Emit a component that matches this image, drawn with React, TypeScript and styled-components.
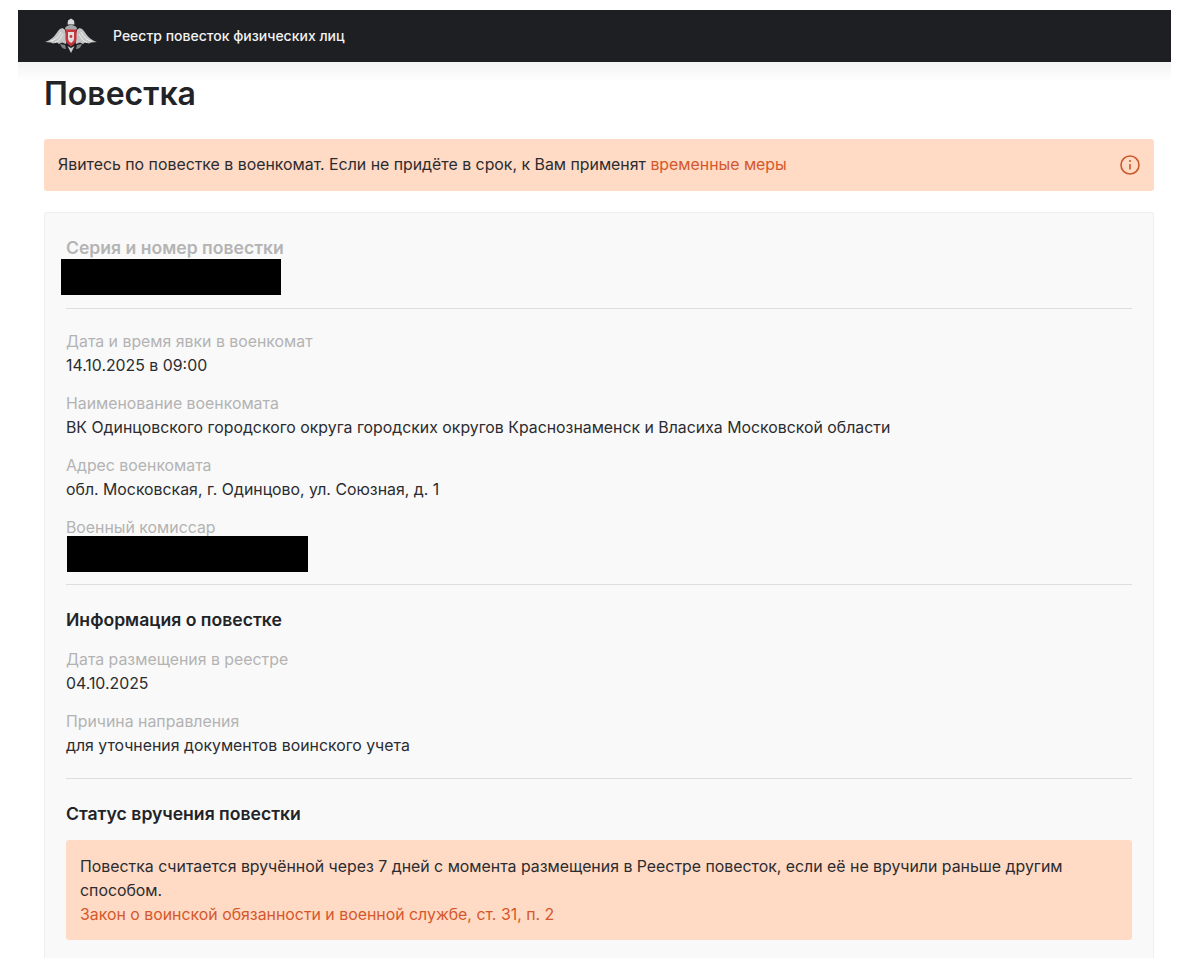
import styled, { createGlobalStyle } from 'styled-components';

const GlobalStyle = createGlobalStyle`
  html, body {
    margin: 0;
    padding: 0;
    background: #fff;
  }
  body {
    font-family: Inter, "Liberation Sans", sans-serif;
    color: #2b2c30;
  }
`;

const Page = styled.div`
  width: 1200px;
  height: 965px;
  padding: 10px 29px 7px 18px;
  box-sizing: border-box;
  overflow: hidden;
`;

const Shell = styled.div`
  height: 100%;
  overflow: hidden;
`;

const TopBar = styled.header`
  height: 52px;
  box-sizing: border-box;
  background: #1e1f23;
  display: flex;
  align-items: center;
  padding: 0 0 1px 27px;
  gap: 16px;
`;

const TopBarTitle = styled.span`
  color: #f2f2f2;
  font-size: 14px;
  font-weight: 500;
`;

const Main = styled.main`
  padding: 0 17px 0 26px;
  background: linear-gradient(#f3f3f3 0, #fff 20px);
`;

const PageTitle = styled.h1`
  margin: 0;
  padding-top: 13px;
  height: 64px;
  box-sizing: border-box;
  font-size: 32px;
  line-height: 38px;
  font-weight: 600;
  color: #222327;
`;

const Notice = styled.div`
  background: #ffdac4;
  border-radius: 3px;
  display: flex;
  align-items: center;
  justify-content: space-between;
  height: 52px;
  margin-top: 13px;
  padding: 0 14px;
  font-size: 15.87px;
`;

const NoticeText = styled.span`
  margin-top: -2px;
`;

const Accent = styled.span`
  color: #d4582c;
`;

const Card = styled.section`
  margin-top: 21px;
  background: #f9f9f9;
  border: 1px solid #efefef;
  border-bottom: 0;
  border-radius: 3px 3px 0 0;
  padding: 24px 21px 18px;
`;

const Divider = styled.hr<{ $top: number }>`
  border: 0;
  border-top: 1px solid #dedede;
  margin: ${({ $top }) => $top}px 0 0;
`;

const SeriesLabel = styled.div`
  font-size: 17.6px;
  line-height: 22px;
  font-weight: 600;
  color: #b4b4b4;
`;

const Redaction = styled.div<{ $width: number; $shift: number; $pull?: number }>`
  position: relative;
  width: ${({ $width }) => $width}px;
  height: 36px;
  background: #000;
  margin-left: ${({ $shift }) => $shift}px;
  margin-top: ${({ $pull }) => -($pull ?? 0)}px;
`;

const Field = styled.div<{ $top: number }>`
  margin-top: ${({ $top }) => $top}px;
`;

const FieldLabel = styled.div`
  font-size: 15.85px;
  line-height: 24px;
  color: #b3b3b3;
`;

const FieldValue = styled.div`
  font-size: 15.85px;
  line-height: 24px;
  color: #2b2c30;
`;

const SectionTitle = styled.h2`
  margin: 24px 0 0;
  font-size: 17.6px;
  line-height: 22px;
  font-weight: 600;
  color: #222327;
`;

const StatusNotice = styled.div`
  margin-top: 15px;
  background: #ffdac4;
  border-radius: 3px;
  padding: 15px 14px 13px;
  font-size: 15.87px;
  line-height: 24px;
`;

const Emblem = () => (
  <svg width="52" height="36" viewBox="0 0 52 36" aria-hidden="true">
    {/* wings */}
    <path d="M0 24 C6 22 10 18 13 13 C15 10 18 9 20 12 L22 20 L21 26 L17 24.5 L14 26 L12 24.5 L8 25.5 L6 24.5 Z" fill="#c2c4c5" />
    <path d="M52 24 C46 22 42 18 39 13 C37 10 34 9 32 12 L30 20 L31 26 L35 24.5 L38 26 L40 24.5 L44 25.5 L46 24.5 Z" fill="#c2c4c5" />
    <path d="M5 23.5 C10 22 14 19 16 14 M10 24.5 C14 23 16 20 18 16 M47 23.5 C42 22 38 19 36 14 M42 24.5 C38 23 36 20 34 16" stroke="#eeeeee" strokeWidth="1" fill="none" />
    {/* crown and heads */}
    <path d="M22.5 6.5 L23 2.5 L26 0.5 L29 2.5 L29.5 6.5 Z" fill="#dadada" />
    <path d="M20 11 C20 8 24 7 26 7 C28 7 32 8 32 11 L30 12.5 H22 Z" fill="#a4a6a8" />
    {/* shield */}
    <path d="M20.5 11.5 H31.5 V21 C31.5 24.5 28.5 26.5 26 28.5 C23.5 26.5 20.5 24.5 20.5 21 Z" fill="#c5353c" />
    <path d="M23 14 H29 V20.5 C29 22.5 27.3 24 26 25 C24.7 24 23 22.5 23 20.5 Z" fill="#e3dede" />
    <circle cx="26" cy="18.5" r="1.4" fill="#c5353c" />
    {/* claws and tail */}
    <path d="M15 26 C16 29 18 31 21 31 L20 27 Z M37 26 C36 29 34 31 31 31 L32 27 Z" fill="#7f8183" />
    <path d="M22.5 28 L26 35 L29.5 28 L26 30 Z" fill="#c9cacb" />
  </svg>
);

const InfoIcon = () => (
  <svg width="20" height="20" viewBox="0 0 20 20" fill="none" stroke="#c9582b" aria-hidden="true">
    <circle cx="10" cy="10" r="9" strokeWidth="1.6" />
    <path d="M10 9 V14.5" strokeWidth="1.6" />
    <circle cx="10" cy="6" r="1" fill="#c9582b" stroke="none" />
  </svg>
);

const App = () => (
  <Page>
    <GlobalStyle />
    <Shell>
      <TopBar>
        <Emblem />
        <TopBarTitle>Реестр повесток физических лиц</TopBarTitle>
      </TopBar>
      <Main>
        <PageTitle>Повестка</PageTitle>
        <Notice>
          <NoticeText>
            Явитесь по повестке в военкомат. Если не придёте в срок, к Вам применят{' '}
            <Accent>временные меры</Accent>
          </NoticeText>
          <InfoIcon />
        </Notice>
        <Card>
          <SeriesLabel>Серия и номер повестки</SeriesLabel>
          <Redaction $width={220} $shift={-5} />
          <Divider $top={13} />
          <Field $top={21}>
            <FieldLabel>Дата и время явки в военкомат</FieldLabel>
            <FieldValue>14.10.2025 в 09:00</FieldValue>
          </Field>
          <Field $top={14}>
            <FieldLabel>Наименование военкомата</FieldLabel>
            <FieldValue>ВК Одинцовского городского округа городских округов Краснознаменск и Власиха Московской области</FieldValue>
          </Field>
          <Field $top={14}>
            <FieldLabel>Адрес военкомата</FieldLabel>
            <FieldValue>обл. Московская, г. Одинцово, ул. Союзная, д. 1</FieldValue>
          </Field>
          <Field $top={14}>
            <FieldLabel>Военный комиссар</FieldLabel>
            <Redaction $width={241} $shift={1} $pull={4} />
          </Field>
          <Divider $top={12} />
          <SectionTitle>Информация о повестке</SectionTitle>
          <Field $top={17}>
            <FieldLabel>Дата размещения в реестре</FieldLabel>
            <FieldValue>04.10.2025</FieldValue>
          </Field>
          <Field $top={14}>
            <FieldLabel>Причина направления</FieldLabel>
            <FieldValue>для уточнения документов воинского учета</FieldValue>
          </Field>
          <Divider $top={20} />
          <SectionTitle>Статус вручения повестки</SectionTitle>
          <StatusNotice>
            Повестка считается вручённой через 7 дней с момента размещения в Реестре повесток, если её не вручили раньше другим способом.
            <br />
            <Accent>Закон о воинской обязанности и военной службе, ст. 31, п. 2</Accent>
          </StatusNotice>
        </Card>
      </Main>
    </Shell>
  </Page>
);

export default App;
